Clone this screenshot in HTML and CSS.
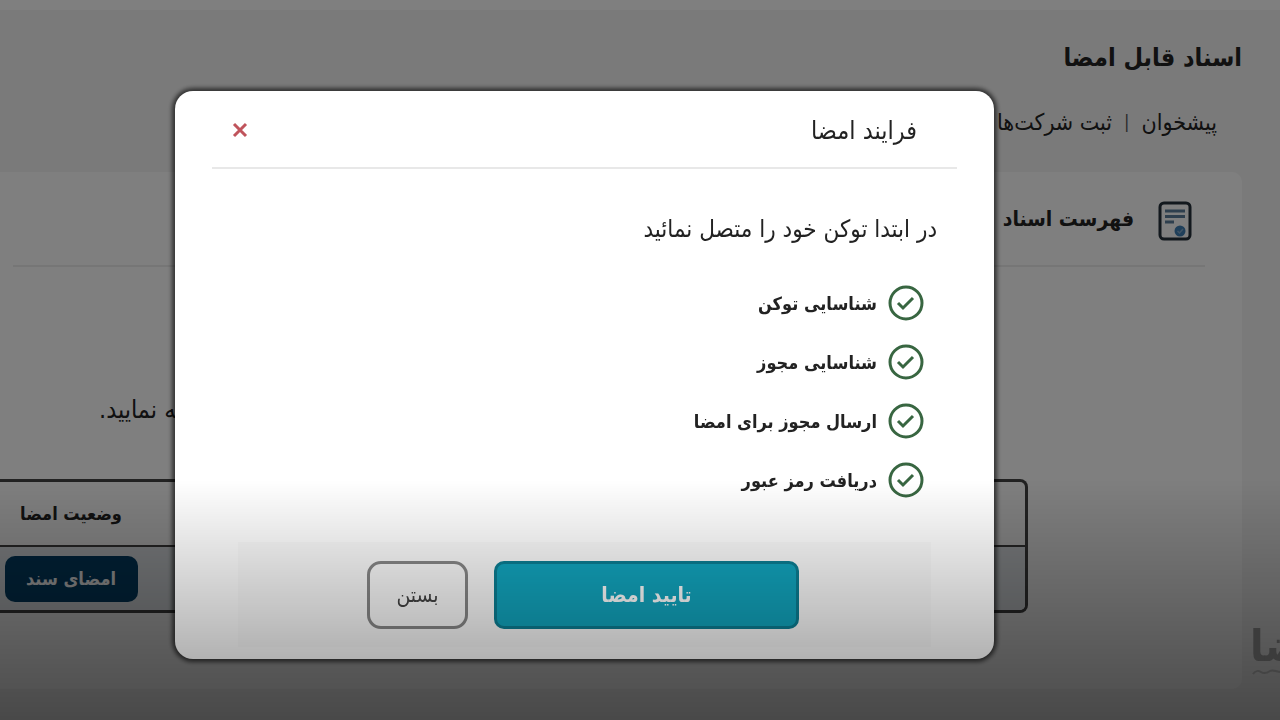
FILE: index.html
```html
<!DOCTYPE html>
<html lang="fa" dir="rtl">
<head>
    <meta charset="UTF-8">
    <meta name="viewport" content="width=device-width, initial-scale=1.0">
    <title>اسناد قابل امضا</title>
    <link rel="stylesheet" href="styles.css">
</head>
<body>
    <div class="page">
        <div class="topbar"></div>
        <header class="page-header">
            <h1>اسناد قابل امضا</h1>
            <nav class="breadcrumb">
                <a href="#">پیشخوان</a>
                <span class="sep">|</span>
                <a href="#">ثبت شرکت‌ها</a>
            </nav>
        </header>

        <main class="card">
            <div class="card-header">
                <svg class="doc-icon" viewBox="0 0 34 40" fill="none">
                    <rect x="2" y="2" width="30" height="36" rx="4" stroke="#25313b" stroke-width="3"/>
                    <path d="M7 10h20M7 15.500h20M7 21h9" stroke="#5c7f9c" stroke-width="3"/>
                    <circle cx="22" cy="30" r="5.500" fill="#3f7fb5"/>
                    <path d="M19.500 30l2 2 3.500-4" stroke="#7fa8cc" stroke-width="1.500"/>
                </svg>
                <h2>فهرست اسناد</h2>
            </div>
            <p class="notice">مراجعه نمایید.</p>
            <div class="table-box">
                <table>
                    <thead>
                        <tr>
                            <th></th>
                            <th class="status">وضعیت امضا</th>
                        </tr>
                    </thead>
                    <tbody>
                        <tr>
                            <td></td>
                            <td class="status"><button type="button" class="sign-btn">امضای سند</button></td>
                        </tr>
                    </tbody>
                </table>
            </div>
        </main>
    </div>

    <!-- Modal -->
    <div class="overlay">
        <div class="modal" role="dialog" aria-labelledby="modalTitle">
            <div class="modal-header">
                <h3 id="modalTitle">فرایند امضا</h3>
                <button type="button" class="close-btn" aria-label="بستن">
                    <svg viewBox="0 0 16 16" fill="none" stroke="#c0545c" stroke-width="3"><path d="M2 2l12 12M14 2L2 14"/></svg>
                </button>
            </div>
            <div class="modal-body">
                <p class="lead">در ابتدا توکن خود را متصل نمائید</p>
                <ul class="steps">
                    <li>
                        <svg class="check" viewBox="0 0 36 36"><circle cx="18" cy="18" r="16"/><path d="M10 18l5 5 10-10"/></svg>
                        <span>شناسایی توکن</span>
                    </li>
                    <li>
                        <svg class="check" viewBox="0 0 36 36"><circle cx="18" cy="18" r="16"/><path d="M10 18l5 5 10-10"/></svg>
                        <span>شناسایی مجوز</span>
                    </li>
                    <li>
                        <svg class="check" viewBox="0 0 36 36"><circle cx="18" cy="18" r="16"/><path d="M10 18l5 5 10-10"/></svg>
                        <span>ارسال مجوز برای امضا</span>
                    </li>
                    <li>
                        <svg class="check" viewBox="0 0 36 36"><circle cx="18" cy="18" r="16"/><path d="M10 18l5 5 10-10"/></svg>
                        <span>دریافت رمز عبور</span>
                    </li>
                </ul>
            </div>
            <div class="modal-footer">
                <button type="button" class="btn-confirm">تایید امضا</button>
                <button type="button" class="btn-cancel">بستن</button>
            </div>
        </div>
    </div>

    <div class="fade"></div>
    <div class="watermark">
        <span>ضا</span>
        <svg viewBox="0 0 30 8" fill="none" stroke="#444" stroke-width="2"><path d="M1 6c3-4 5-4 8-2s6 1 9-1 6 1 11 1"/></svg>
    </div>
</body>
</html>
```
FILE: styles.css
```css
* {
    box-sizing: border-box;
}
body {
    margin: 0;
    min-height: 100vh;
    overflow: hidden;
    background-color: #f5f5f5;
    font-family: "DejaVu Sans Condensed", "DejaVu Sans", sans-serif;
    color: #222;
}
h1, h2, h3, p, ul {
    margin: 0;
    padding: 0;
}
button {
    font-family: inherit;
    cursor: pointer;
}
.topbar {
    height: 10px;
    background-color: #fff;
}
.page-header {
    padding: 28px 38px 0;
}
.page-header h1 {
    font-size: 25px;
    line-height: 40px;
}
.breadcrumb {
    display: flex;
    gap: 12px;
    padding: 28px 25px 0;
    font-size: 23px;
    line-height: 32px;
}
.breadcrumb a {
    color: #222;
    text-decoration: none;
}
.breadcrumb .sep {
    color: #555;
    font-size: 18px;
}
.card {
    margin: 34px 38px 0 -24px;
    padding-bottom: 76px;
    background-color: #fff;
    border-radius: 10px;
}
.card-header {
    display: flex;
    align-items: center;
    gap: 24px;
    margin: 0 37px;
    padding: 4px 13px 0;
    height: 95px;
    border-bottom: 2px solid #ececec;
}
.doc-icon {
    width: 34px;
    height: 40px;
}
.card-header h2 {
    font-size: 21px;
    line-height: 28px;
    padding-bottom: 4px;
}
.notice {
    padding: 126px 0 0 123px;
    text-align: left;
    font-size: 25px;
    line-height: 34px;
}
.table-box {
    margin: 52px 214px 0 0;
    border: 3px solid #444;
    border-left: 0;
    border-radius: 0 8px 8px 0;
    overflow: hidden;
}
table {
    width: 100%;
    border-collapse: collapse;
}
th, td {
    height: 64px;
    padding: 0;
    text-align: center;
    font-size: 18px;
}
th {
    border-bottom: 2px solid #444;
}
td {
    background-color: #e6ebee;
}
.status {
    width: 190px;
}
.sign-btn {
    width: 133px;
    height: 46px;
    border: 0;
    border-radius: 10px;
    background-color: #044068;
    color: #fff;
    font-size: 18px;
    font-weight: bold;
}

/* Modal */
.overlay {
    position: fixed;
    inset: 0;
    display: flex;
    align-items: flex-start;
    padding: 91px 286px 0 0;
    background-color: rgba(0, 0, 0, 0.5);
}
.modal {
    width: 64vw;
    padding: 0 37px 12px;
    background-color: #fff;
    border-radius: 18px;
    box-shadow: 0 0 4px 3px rgba(0, 0, 0, 0.6);
}
.modal-header {
    display: flex;
    align-items: center;
    justify-content: space-between;
    height: 78px;
    padding: 2px 40px 0 20px;
    border-bottom: 2px solid #e8e8e8;
}
.modal-header h3 {
    font-size: 25px;
    font-weight: normal;
}
.close-btn {
    display: flex;
    padding: 0;
    border: 0;
    background: none;
}
.close-btn svg {
    width: 16px;
    height: 16px;
}
.modal-body {
    padding: 40px 20px 0;
}
.lead {
    font-size: 24px;
    line-height: 40px;
}
.steps {
    display: flex;
    flex-direction: column;
    gap: 23px;
    padding: 36px 13px 44px;
    list-style: none;
}
.steps li {
    display: flex;
    align-items: center;
    gap: 11px;
    height: 36px;
    font-size: 18px;
    font-weight: bold;
}
.check {
    width: 36px;
    height: 36px;
    fill: none;
    stroke: #386641;
    stroke-width: 3;
}
.modal-footer {
    display: flex;
    gap: 26px;
    margin: 0 26px;
    padding: 19px 132px 18px;
    background-color: #fbfbfb;
}
.btn-confirm, .btn-cancel {
    flex: none;
    height: 68px;
    font-size: 21px;
}
.btn-confirm {
    width: 305px;
    border: 3px solid #0c7f94;
    border-radius: 10px;
    background-color: #12a5be;
    color: #fff;
    font-weight: bold;
}
.btn-cancel {
    width: 101px;
    border: 3px solid #888;
    border-radius: 14px;
    background: none;
    color: #444;
}

/* Bottom shading over the whole page */
.fade {
    position: fixed;
    left: 0;
    right: 0;
    bottom: 0;
    height: 240px;
    background: linear-gradient(to bottom, rgba(0, 0, 0, 0), rgba(0, 0, 0, 0.3) 75%, rgba(0, 0, 0, 0.4));
    pointer-events: none;
}
.watermark {
    position: fixed;
    left: 1250px;
    bottom: 44px;
    color: #3c3c3c;
    font-size: 44px;
    font-weight: bold;
    line-height: 60px;
}
.watermark svg {
    position: absolute;
    left: 2px;
    bottom: 0;
    width: 30px;
    height: 8px;
}
```
